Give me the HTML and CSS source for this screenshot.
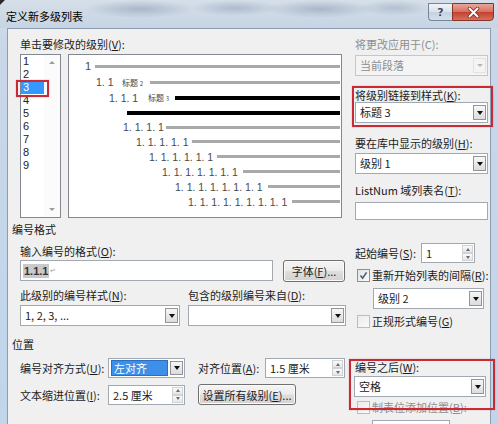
FILE: index.html
```html
<!DOCTYPE html>
<html lang="zh-CN">
<head>
<meta charset="utf-8">
<title>定义新多级列表</title>
<link rel="stylesheet" href="styles.css">
</head>
<body>
<div class="window">
  <div class="titlebar">
    <div class="title">定义新多级列表</div>
    <div class="caption">
      <div class="cbtn help">?</div>
      <div class="cbtn close">
        <svg width="13" height="11" viewBox="0 0 13 11"><path d="M2.5 1.5 L10.5 9.5 M10.5 1.5 L2.5 9.5" stroke="#7a2b22" stroke-width="3.6" stroke-linecap="round"/><path d="M2.5 1.5 L10.5 9.5 M10.5 1.5 L2.5 9.5" stroke="#ffffff" stroke-width="2" stroke-linecap="round"/></svg>
      </div>
    </div>
  </div>

  <div class="client">
    <div class="top">
      <div class="top-left">
        <div class="lab lab16">单击要修改的级别(<u>V</u>):</div>
        <div class="top-row">
          <div class="levels">
            <div class="level-items">
              <div class="li">1</div>
              <div class="li">2</div>
              <div class="li sel">3</div>
              <div class="li">4</div>
              <div class="li">5</div>
              <div class="li">6</div>
              <div class="li">7</div>
              <div class="li">8</div>
              <div class="li">9</div>
            </div>
            <div class="vscroll"><span class="tri-up"></span><span class="tri-down"></span></div>
          </div>
          <div class="preview">
            <div class="pr r1"><span class="pl">1</span><span class="ln"></span></div>
            <div class="pr r2"><span class="pl"><span class="pn">1. 1</span><span class="hd">标题 <small>2</small></span></span><span class="ln"></span></div>
            <div class="pr r3"><span class="pl"><span class="pn">1. 1. 1</span><span class="hd">标题 <small>3</small></span></span><span class="ln blk"></span></div>
            <div class="pr r4"><span class="ln blk"></span></div>
            <div class="pr r5"><span class="pl">1. 1. 1. 1</span><span class="ln"></span></div>
            <div class="pr r6"><span class="pl">1. 1. 1. 1. 1</span><span class="ln"></span></div>
            <div class="pr r7"><span class="pl">1. 1. 1. 1. 1. 1</span><span class="ln"></span></div>
            <div class="pr r8"><span class="pl">1. 1. 1. 1. 1. 1. 1</span><span class="ln"></span></div>
            <div class="pr r9"><span class="pl">1. 1. 1. 1. 1. 1. 1. 1</span><span class="ln"></span></div>
            <div class="pr r10"><span class="pl">1. 1. 1. 1. 1. 1. 1. 1. 1</span><span class="ln"></span></div>
          </div>
        </div>
      </div>

      <div class="top-right">
        <div class="lab dis-text tr-l1">将更改应用于(C):</div>
        <div class="combo disabled tr-c1"><span class="val">当前段落</span><span class="dd"></span></div>
        <div class="lab tr-l2">将级别链接到样式(<u>K</u>):</div>
        <div class="combo"><span class="val">标题 3</span><span class="dd"></span></div>
        <div class="lab tr-l3">要在库中显示的级别(<u>H</u>):</div>
        <div class="combo tr-c3"><span class="val">级别 1</span><span class="dd"></span></div>
        <div class="lab tr-l4">ListNum 域列表名(<u>T</u>):</div>
        <div class="tbox tr-t4"></div>
      </div>
    </div>

    <div class="sec-title sec-fmt">编号格式</div>
    <div class="fmt">
      <div class="fmt-left">
        <div class="lab fl-l1">输入编号的格式(<u>O</u>):</div>
        <div class="fl-row">
          <div class="tbox fmt-input"><span class="hl">1.1.1</span><span class="ret">↵</span></div>
          <div class="btn font-btn">字体(<u>F</u>)...</div>
        </div>
        <div class="fl-labs">
          <div class="lab w168">此级别的编号样式(<u>N</u>):</div>
          <div class="lab">包含的级别编号来自(<u>D</u>):</div>
        </div>
        <div class="fl-combos">
          <div class="combo w160"><span class="val">1, 2, 3, ...</span><span class="dd"></span></div>
          <div class="combo w158"><span class="val"></span><span class="dd"></span></div>
        </div>
      </div>
      <div class="fmt-right">
        <div class="fr-start">
          <div class="lab start-lab">起始编号(<u>S</u>):</div>
          <div class="spin start-spin"><span class="val">1</span><span class="arrows"><span class="arr"><i class="su"></i></span><span class="arr"><i class="sd"></i></span></span></div>
        </div>
        <div class="chkrow fr-c1"><span class="cb"><svg width="9" height="9" viewBox="0 0 9 9"><path d="M1.5 4.6 L3.6 7.2 L7.6 1.4" fill="none" stroke="#4e5d70" stroke-width="1.6"/></svg></span><span class="lab">重新开始列表的间隔(<u>R</u>):</span></div>
        <div class="combo restart-combo"><span class="val">级别 2</span><span class="dd"></span></div>
        <div class="chkrow fr-c2"><span class="cb light"></span><span class="lab">正规形式编号(<u>G</u>)</span></div>
      </div>
    </div>

    <div class="sec-title sec-pos">位置</div>
    <div class="pos">
      <div class="pos-left">
        <div class="pos-row pr1">
          <div class="lab w88">编号对齐方式(<u>U</u>):</div>
          <div class="combo w77 h20"><span class="val"><span class="selval">左对齐</span></span><span class="dd"></span></div>
          <div class="lab w67 ml13">对齐位置(<u>A</u>):</div>
          <div class="spin w80"><span class="val">1.5 厘米</span><span class="arrows"><span class="arr"><i class="su"></i></span><span class="arr"><i class="sd"></i></span></span></div>
        </div>
        <div class="pos-row pr2">
          <div class="lab w88">文本缩进位置(<u>I</u>):</div>
          <div class="spin w77"><span class="val">2.5 厘米</span><span class="arrows"><span class="arr"><i class="su"></i></span><span class="arr"><i class="sd"></i></span></span></div>
          <div class="btn all-btn ml13">设置所有级别(<u>E</u>)...</div>
        </div>
      </div>
      <div class="pos-right">
        <div class="lab pr-l1">编号之后(<u>W</u>):</div>
        <div class="combo after-combo"><span class="val">空格</span><span class="dd"></span></div>
        <div class="chkrow pr-c1 dis-text"><span class="cb light"></span><span class="lab">制表位添加位置(<u>B</u>):</span></div>
        <div class="tbox tab-box"></div>
      </div>
    </div>
  </div>

  <div class="mark mark-level"></div>
  <div class="mark mark-link"></div>
  <div class="mark mark-after"></div>
</div>
</body>
</html>
```

FILE: styles.css
```css
* { box-sizing: border-box; }
html, body { margin: 0; padding: 0; }
body {
  width: 498px;
  height: 424px;
  overflow: hidden;
  font-family: "Noto Sans CJK SC", "Noto Sans", sans-serif;
  font-size: 11px;
  color: #1c1c1c;
  background: #c6d7ea;
}
u { text-decoration: underline; text-underline-offset: 1px; }

.window {
  position: relative;
  width: 498px;
  height: 424px;
  display: flex;
  flex-direction: column;
  background: linear-gradient(180deg, #d4dee9 0, #c9d7e7 40px, #c1d5eb 100%);
}

/* title bar */
.titlebar {
  height: 28px;
  flex: none;
  display: flex;
  align-items: flex-start;
  background:
    linear-gradient(135deg, #2a2a2a 0, #2a2a2a 3px, transparent 4px),
    radial-gradient(ellipse 55px 9px at 140px 9px, rgba(120,140,165,.45), transparent),
    radial-gradient(ellipse 45px 8px at 235px 8px, rgba(120,140,165,.40), transparent),
    radial-gradient(ellipse 55px 9px at 320px 9px, rgba(120,140,165,.45), transparent),
    radial-gradient(ellipse 35px 8px at 395px 8px, rgba(120,140,165,.35), transparent),
    linear-gradient(180deg, #d6dfe9, #c7d4e3);
}
.title {
  padding: 8px 0 0 6px;
  line-height: 16px;
  font-size: 11px;
  color: #000;
}
.caption {
  margin: 3px 4px 0 auto;
  display: flex;
}
.cbtn {
  height: 18px;
  display: flex;
  align-items: center;
  justify-content: center;
}
.help {
  width: 24px;
  border: 1px solid #75869c;
  border-right: none;
  border-radius: 0 0 0 4px;
  background: linear-gradient(180deg, #eef3f8 0, #d7e1ec 50%, #c3d1e0 51%, #d3dfeb 100%);
  font-family: "DejaVu Sans", sans-serif;
  font-weight: bold;
  font-size: 11px;
  color: #3e4a5a;
  text-shadow: 0 0 2px #fff;
}
.close {
  width: 42px;
  border: 1px solid #8a3128;
  border-radius: 0 0 4px 0;
  background: linear-gradient(180deg, #e9a59b 0, #d66f61 50%, #c4402f 51%, #d4715f 100%);
}

/* client area */
.client {
  flex: 1;
  margin: 0 7px;
  border: 1px solid #8d9db1;
  border-bottom: none;
  background: #f0f0f0;
  padding-left: 12px;
  overflow: hidden;
}
.lab { line-height: 14px; white-space: nowrap; }
.lab16 { line-height: 16px; }
.dis-text, .dis-text .lab { color: #8e8e8e; }

.top { display: flex; margin-top: 7px; height: 184px; }
.top-left { width: 322px; }
.top-row { display: flex; margin-top: 2px; height: 164px; }

.levels {
  width: 41px;
  height: 164px;
  border: 1px solid #828790;
  background: #fff;
  display: flex;
}
.level-items { flex: 1; }
.li {
  height: 13px;
  line-height: 13px;
  padding-left: 2px;
  font-family: "Liberation Sans", Arial, sans-serif;
  font-size: 11px;
  color: #222;
}
.li.sel { background: #3399ff; color: #fff; }
.vscroll {
  width: 16px;
  display: flex;
  flex-direction: column;
  justify-content: space-between;
  align-items: center;
  padding: 6px 0 6px;
  background: #fbfbfb;
}
.tri-up { width: 0; height: 0; border-left: 3px solid transparent; border-right: 3px solid transparent; border-bottom: 3px solid #9c9c9c; }
.tri-down { width: 0; height: 0; border-left: 3px solid transparent; border-right: 3px solid transparent; border-top: 3px solid #9c9c9c; }

.preview {
  margin-left: 7px;
  width: 274px;
  height: 164px;
  border: 1px solid #828790;
  background: #fff;
  padding-top: 3px;
  padding-right: 1px;
}
.pr {
  display: flex;
  align-items: center;
  height: 15px;
  font-family: "Liberation Sans", Arial, sans-serif;
  font-size: 10.5px;
  color: #4a4a4a;
  white-space: nowrap;
}
.pl { flex: none; display: flex; align-items: center; }
.pn { flex: none; }
.hd { font-family: "Noto Sans CJK SC", sans-serif; font-size: 8px; color: #444; }
.hd small { font-size: 6px; }
.ln { flex: 1; height: 3px; background: #a9a9a9; }
.ln.blk { background: #000; height: 4px; }
.r1 { height: 16px; padding-left: 16px; font-size: 11px; }
.r1 .pl { width: 10px; }
.r2 { height: 16px; padding-left: 27px; }
.r2 .pl { width: 54px; }
.r2 .pn { width: 26px; }
.r3 { height: 15px; padding-left: 40px; }
.r3 .pl { width: 66px; }
.r3 .pn { width: 39px; }
.r4 { height: 15px; padding-left: 58px; }
.r5 { height: 14px; padding-left: 54px; }
.r5 .pl { width: 43px; }
.r6 { padding-left: 67px; }
.r6 .pl { width: 56px; }
.r7 { padding-left: 80px; }
.r7 .pl { width: 68px; }
.r8 { padding-left: 93px; }
.r8 .pl { width: 81px; }
.r9 { padding-left: 106px; }
.r9 .pl { width: 93px; }
.r10 { padding-left: 119px; }
.r10 .pl { width: 104px; }

.top-right { margin-left: 13px; width: 133px; display: flex; flex-direction: column; }
.tr-l1 { margin-top: 1px; }
.tr-c1 { margin-top: 4px; }
.tr-l2 { margin-top: 13px; line-height: 13px; }
.tr-l3 { margin-top: 13px; }
.tr-c3 { margin-top: 3px; }
.tr-l4 { margin-top: 9px; }
.tr-t4 { margin-top: 5px; height: 18px; }

/* controls */
.combo {
  display: flex;
  height: 21px;
  border: 1px solid #a3a9b1;
  background: #fff;
  flex: none;
}
.combo .val { flex: 1; padding-left: 4px; line-height: 19px; white-space: nowrap; overflow: hidden; }
.combo .dd {
  width: 13px;
  margin: 2px 1px 2px 0;
  border: 1px solid #8f959c;
  background: linear-gradient(180deg, #f7f7f7, #dcdcdc);
  display: flex;
  align-items: center;
  justify-content: center;
}
.combo .dd::after {
  content: "";
  width: 0; height: 0;
  border-left: 3.5px solid transparent;
  border-right: 3.5px solid transparent;
  border-top: 4px solid #111;
}
.combo.disabled { background: #f4f4f4; border-color: #c6c6c6; color: #8e8e8e; }
.combo.disabled .dd { border-color: #e2e2e2; background: #f4f4f4; }
.combo.disabled .dd::after { border-top-color: #b9b9b9; border-left-width: 3px; border-right-width: 3px; border-top-width: 3px; }

.tbox { border: 1px solid #a3a9b1; background: #fff; flex: none; }

.spin { display: flex; height: 20px; border: 1px solid #a3a9b1; background: #fff; flex: none; }
.spin .val { flex: 1; padding-left: 4px; line-height: 18px; white-space: nowrap; }
.arrows { width: 11px; display: flex; flex-direction: column; margin: 1px 1px 1px 0; }
.arr {
  flex: 1;
  border: 1px solid #cfd3d8;
  background: linear-gradient(180deg, #fafafa, #e6e6e6);
  display: flex;
  align-items: center;
  justify-content: center;
}
.su { width: 0; height: 0; border-left: 2.5px solid transparent; border-right: 2.5px solid transparent; border-bottom: 3px solid #6a6a6a; }
.sd { width: 0; height: 0; border-left: 2.5px solid transparent; border-right: 2.5px solid transparent; border-top: 3px solid #6a6a6a; }

.btn {
  height: 22px;
  border: 1px solid #707070;
  border-radius: 3px;
  background: linear-gradient(180deg, #f4f4f4 0, #ececec 48%, #dedede 52%, #d2d2d2 100%);
  box-shadow: inset 0 0 0 1px #fbfbfb;
  display: flex;
  align-items: center;
  justify-content: center;
  white-space: nowrap;
  flex: none;
}

.cb {
  width: 13px;
  height: 13px;
  flex: none;
  border: 1px solid #8f8f8f;
  background: linear-gradient(135deg, #e2e2e2, #fbfbfb);
  display: flex;
  align-items: center;
  justify-content: center;
  margin: 0 2px 0 2px;
}
.cb.light { border-color: #bdbdbd; background: linear-gradient(135deg, #ececec, #fafafa); }
.chkrow { display: flex; align-items: center; height: 14px; }

.sec-title { margin-left: -8px; line-height: 14px; }
.sec-fmt { margin-top: 2px; }
.sec-pos { margin-top: 9px; }

.fmt { display: flex; height: 92px; }
.fmt-left { width: 326px; }
.fl-l1 { margin-top: 8px; }
.fl-row { display: flex; margin-top: 2px; height: 22px; }
.fmt-input {
  width: 253px;
  height: 21px;
  display: flex;
  align-items: center;
  padding-left: 2px;
  font-family: "Liberation Sans", Arial, sans-serif;
  font-size: 11px;
}
.hl { background: #c9c9c9; color: #333; line-height: 14px; padding: 0 1px; font-weight: bold; }
.ret { font-size: 7px; color: #9a9a9a; margin-left: 1px; }
.font-btn { width: 62px; margin-left: 10px; }
.fl-labs { display: flex; margin-top: 6px; }
.w168 { width: 168px; }
.fl-combos { display: flex; margin-top: 3px; gap: 8px; }
.w160 { width: 160px; }
.w158 { width: 158px; }

.fmt-right { margin-left: 9px; width: 133px; display: flex; flex-direction: column; }
.fr-start { display: flex; margin-top: 7px; height: 20px; align-items: center; }
.start-lab { width: 66px; }
.start-spin { width: 54px; }
.fr-c1 { margin-top: 5px; }
.restart-combo { margin-top: 6px; margin-left: 18px; width: 111px; }
.fr-c2 { margin-top: 5px; }

.pos { display: flex; }
.pos-left { width: 326px; }
.pos-row { display: flex; align-items: center; }
.pr1 { margin-top: 7px; height: 20px; }
.pr2 { margin-top: 6px; height: 21px; }
.w88 { width: 88px; }
.w77 { width: 77px; }
.w67 { width: 67px; }
.w80 { width: 80px; }
.h20 { height: 20px; }
.ml13 { margin-left: 13px; }
.selval {
  display: inline-block;
  background: #3d8fe8;
  border: 1px solid #2a6fc4;
  color: #fff;
  line-height: 14px;
  padding: 0 20px 0 2px;
  margin-left: -2px;
}
.pos-row .combo .val { line-height: 18px; }
.all-btn { width: 98px; height: 21px; }

.pos-right { margin-left: 9px; width: 133px; display: flex; flex-direction: column; }
.pr-l1 { margin-top: 9px; }
.after-combo { margin-top: 2px; margin-left: -1px; width: 132px; }
.pr-c1 { margin-top: 3px; }
.tab-box { margin-top: 6px; margin-left: 17px; width: 78px; height: 20px; }

/* red annotation frames */
.mark {
  position: absolute;
  border: 2px solid #c92b36;
  box-shadow: 0 0 1px rgba(200, 40, 55, .6);
  pointer-events: none;
}
.mark-level { left: 16px; top: 80px; width: 33px; height: 17px; }
.mark-link { left: 352px; top: 86px; width: 141px; height: 41px; }
.mark-after { left: 349px; top: 359px; width: 146px; height: 51px; }
```
